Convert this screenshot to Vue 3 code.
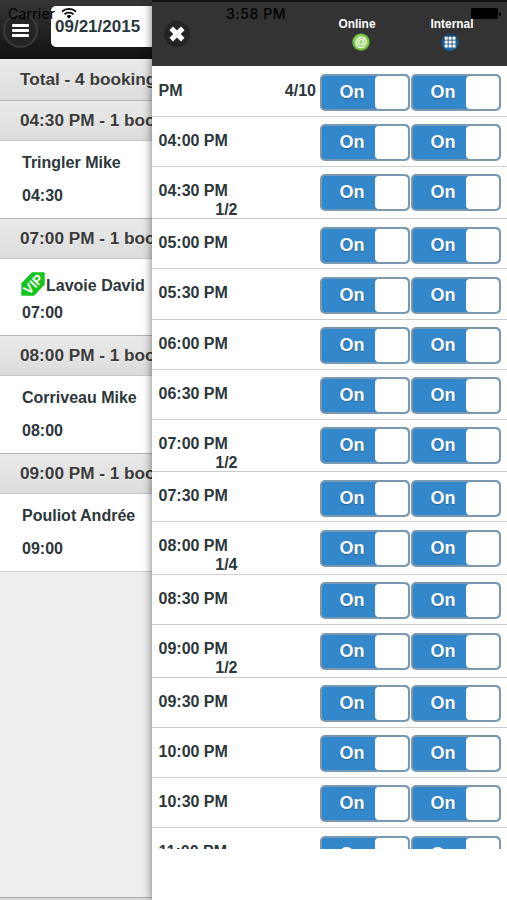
<template>
  <div class="app">
    <div class="bookings">
      <header class="top-bar">
        <button class="menu-btn" aria-label="Menu">
          <span></span>
          <span></span>
          <span></span>
        </button>
        <div class="date-input">09/21/2015</div>
      </header>

      <div class="divider total">Total - 4 bookings</div>
      <template v-for="group in groups" :key="group.time">
        <div class="divider">{{ group.time }} PM - 1 booking</div>
        <div class="booking" :class="{ vip: group.vip }">
          <div class="name">
            <svg v-if="group.vip" class="vip-tag" viewBox="0 0 24 24">
              <path d="M11 .3H23.7V12.5L13 23.7H.3V11.3Z" fill="#12c51c" />
              <text x="12" y="17" text-anchor="middle" transform="rotate(-45 12 12)">VIP</text>
            </svg>
            <span>{{ group.name }}</span>
          </div>
          <div class="hour">{{ group.time }}</div>
        </div>
      </template>
      <div class="bottom-bar"></div>
    </div>

    <div class="panel">
      <header class="panel-head">
        <button class="close-btn" aria-label="Close">
          <svg viewBox="0 0 26 26">
            <path d="M7.2 7.4L18.8 18.6M18.8 7.4L7.2 18.6" stroke="#fff" stroke-width="5" />
          </svg>
        </button>
        <div class="channel online">
          <span>Online</span>
          <svg viewBox="0 0 18 18">
            <defs>
              <radialGradient id="online-dot">
                <stop offset="0" stop-color="#8fcf5c" />
                <stop offset=".65" stop-color="#a5dd78" />
                <stop offset="1" stop-color="#58a32a" />
              </radialGradient>
            </defs>
            <circle cx="9" cy="9" r="8.8" fill="url(#online-dot)" />
            <text x="9" y="12.8" text-anchor="middle">@</text>
          </svg>
        </div>
        <div class="channel internal">
          <span>Internal</span>
          <svg viewBox="0 0 18 18">
            <defs>
              <linearGradient id="internal-dot" x1="0" y1="0" x2="0" y2="1">
                <stop offset="0" stop-color="#1c4468" />
                <stop offset="1" stop-color="#1d67a8" />
              </linearGradient>
            </defs>
            <circle cx="9" cy="9" r="8.8" fill="url(#internal-dot)" />
            <g fill="#fff">
              <rect v-for="n in 9" :key="n" :x="3.7 + ((n - 1) % 3) * 3.9" :y="3.7 + Math.floor((n - 1) / 3) * 3.9" width="3" height="3" />
            </g>
          </svg>
        </div>
      </header>

      <div class="slots">
        <div v-for="slot in slots" :key="slot.label" class="slot" :class="{ tall: slot.count }">
          <div class="info">
            <div class="label">
              <span>{{ slot.label }}</span>
              <span v-if="slot.total">{{ slot.total }}</span>
            </div>
            <div v-if="slot.count" class="count">{{ slot.count }}</div>
          </div>
          <div v-for="n in 2" :key="n" class="toggle">
            <span>On</span>
            <i class="knob"></i>
          </div>
        </div>
      </div>
    </div>

    <!-- iOS status bar, sits over both panes -->
    <div class="status-bar">
      <div class="carrier">
        <span>Carrier</span>
        <svg viewBox="0 0 16 12" fill="none" stroke="#000" stroke-width="1.9">
          <path d="M1 4.6A10.4 10.4 0 0 1 15 4.6M3.6 7.3A6.5 6.5 0 0 1 12.4 7.3" />
          <path d="M5.6 9.1A3.6 3.6 0 0 1 10.4 9.1L8 11.7Z" fill="#000" stroke="none" />
        </svg>
      </div>
      <div class="clock">3:58 PM</div>
      <div class="battery"></div>
    </div>
  </div>
</template>

<script setup>
const groups = [
  { time: '04:30', name: 'Tringler Mike' },
  { time: '07:00', name: 'Lavoie David', vip: true },
  { time: '08:00', name: 'Corriveau Mike' },
  { time: '09:00', name: 'Pouliot Andrée' }
]

const slots = [
  { label: 'PM', total: '4/10' },
  { label: '04:00 PM' },
  { label: '04:30 PM', count: '1/2' },
  { label: '05:00 PM' },
  { label: '05:30 PM' },
  { label: '06:00 PM' },
  { label: '06:30 PM' },
  { label: '07:00 PM', count: '1/2' },
  { label: '07:30 PM' },
  { label: '08:00 PM', count: '1/4' },
  { label: '08:30 PM' },
  { label: '09:00 PM', count: '1/2' },
  { label: '09:30 PM' },
  { label: '10:00 PM' },
  { label: '10:30 PM' },
  { label: '11:00 PM' }
]
</script>

<style>
body {
  margin: 0;
}
</style>

<style scoped>
* {
  box-sizing: border-box;
}

.app {
  position: relative;
  display: flex;
  width: 507px;
  height: 900px;
  overflow: hidden;
  font-family: "Liberation Sans", Arial, sans-serif;
  font-weight: bold;
  font-size: 16px;
  color: #2c373b;
}

button {
  border: 0;
  padding: 0;
}

.bookings {
  display: flex;
  flex-direction: column;
  width: 152px;
  flex: none;
  overflow: hidden;
  white-space: nowrap;
  background: #eee;
}

.top-bar {
  display: flex;
  flex: none;
  height: 59px;
  padding: 6px 0 0 3px;
  background: linear-gradient(#363636, #222 55%, #111);
  border-bottom: 1px solid #111;
}

.menu-btn {
  display: flex;
  flex-direction: column;
  flex: none;
  align-items: center;
  justify-content: center;
  gap: 2px;
  width: 35px;
  height: 35px;
  margin-top: 7px;
  border-radius: 50%;
  background: #252525;
  border: 2px solid #3a3a3a;
}

.menu-btn span {
  width: 17px;
  height: 3px;
  border-radius: 1px;
  background: #fff;
}

.date-input {
  flex: none;
  width: 140px;
  height: 41px;
  margin-left: 13px;
  padding-left: 4px;
  border-radius: 5px;
  background: #fff;
  font-size: 17px;
  line-height: 42px;
}

.divider {
  flex: none;
  height: 41px;
  padding-left: 20px;
  background: linear-gradient(#eaeaea, #dcdcdc);
  border-top: 1px solid #b5b5b5;
  border-bottom: 1px solid #c6c6c6;
  color: #3b3b3b;
  font-size: 17.2px;
  line-height: 39px;
  text-shadow: 0 1px 0 #eee;
}

.divider.total {
  border-top-color: #eee;
  border-bottom: 0;
}

.booking {
  flex: none;
  height: 76.7px;
  padding: 11.5px 0 0 22px;
  background: #fff;
}

.booking:nth-last-child(2) {
  height: 78px;
  border-bottom: 1px solid #ccc;
}

.name {
  display: flex;
  align-items: center;
  height: 20px;
}

.hour {
  height: 20px;
  margin-top: 13px;
  line-height: 20px;
}

.booking.vip {
  padding-top: 13.5px;
}

.vip .name {
  height: 27px;
}

.vip .hour {
  margin-top: 4px;
}

.vip-tag {
  width: 24px;
  height: 24px;
  margin: -3px 1px 0 -1px;
}

.vip-tag text {
  fill: #fff;
  font-size: 13.5px;
}

.bottom-bar {
  margin-top: auto;
  height: 3px;
  background: #ddd;
  border-top: 1px solid #aaa;
}

.panel {
  position: relative;
  display: flex;
  flex-direction: column;
  flex: 1;
  background: #fff;
  box-shadow: 0 0 9px rgba(0, 0, 0, 0.55);
}

.panel-head {
  display: flex;
  flex: none;
  height: 66px;
  background: #333;
  border-top: 2px solid #151515;
}

.close-btn {
  width: 26px;
  height: 26px;
  margin: 19px 0 0 12px;
  border-radius: 50%;
  background: #242424;
}

.close-btn svg {
  display: block;
  width: 26px;
  height: 26px;
}

.channel {
  display: flex;
  flex-direction: column;
  align-items: center;
  width: 60px;
  padding-top: 15px;
  color: #fff;
  font-size: 11.9px;
  line-height: 14px;
}

.channel svg {
  width: 18px;
  height: 18px;
  margin: 2px 0 0 8px;
}

.online {
  margin-left: 137px;
}

.internal {
  margin-left: 35px;
}

.internal svg {
  margin-left: -5px;
}

.online text {
  fill: #fff;
  font-size: 12px;
  font-weight: normal;
}

.slots {
  height: 783px;
  padding-top: 0.5px;
  overflow: hidden;
}

.slot {
  display: flex;
  height: 50.15px;
  padding: 7.5px 0 0 6.5px;
  border-bottom: 1.5px solid #ccc;
}

.slot.tall {
  height: 52.5px;
}

.info {
  width: 157.5px;
  margin-right: 3.5px;
  padding-top: 7.5px;
  line-height: 18px;
}

.label {
  display: flex;
  justify-content: space-between;
}

.count {
  width: 79px;
  margin-top: 1px;
  text-align: right;
}

.toggle {
  display: flex;
  flex: none;
  width: 90px;
  height: 37px;
  margin-right: 1px;
  border: 2px solid #7b98b1;
  border-radius: 5px;
  background: #3388cc;
  color: #fff;
  font-size: 18px;
  line-height: 32px;
  text-shadow: 0 1px 1px #245f8f;
}

.toggle span {
  width: 53px;
  padding-left: 8px;
  text-align: center;
}

.knob {
  width: 33px;
  height: 33px;
  border-radius: 4px;
  background: #fff;
}

.status-bar {
  position: absolute;
  top: 0;
  left: 0;
  display: flex;
  align-items: flex-start;
  width: 100%;
  height: 28px;
  padding-top: 6px;
  color: #000;
  font-family: Inter, "Liberation Sans", sans-serif;
  font-size: 14px;
  line-height: 16px;
}

.carrier {
  display: flex;
  width: 218px;
  padding-left: 8px;
  font-weight: normal;
  letter-spacing: 0.2px;
}

.carrier svg {
  width: 16px;
  height: 12px;
  margin: 1px 0 0 6px;
}

.clock {
  width: 76px;
  text-align: center;
  font-weight: 500;
  letter-spacing: 0.6px;
}

.battery {
  position: relative;
  width: 27px;
  height: 11px;
  margin: 2px 0 0 177px;
  border-radius: 2px;
  background: #000;
}

.battery::after {
  content: "";
  position: absolute;
  top: 4px;
  right: -3px;
  width: 2px;
  height: 4px;
  border-radius: 0 2px 2px 0;
  background: #000;
}
</style>
